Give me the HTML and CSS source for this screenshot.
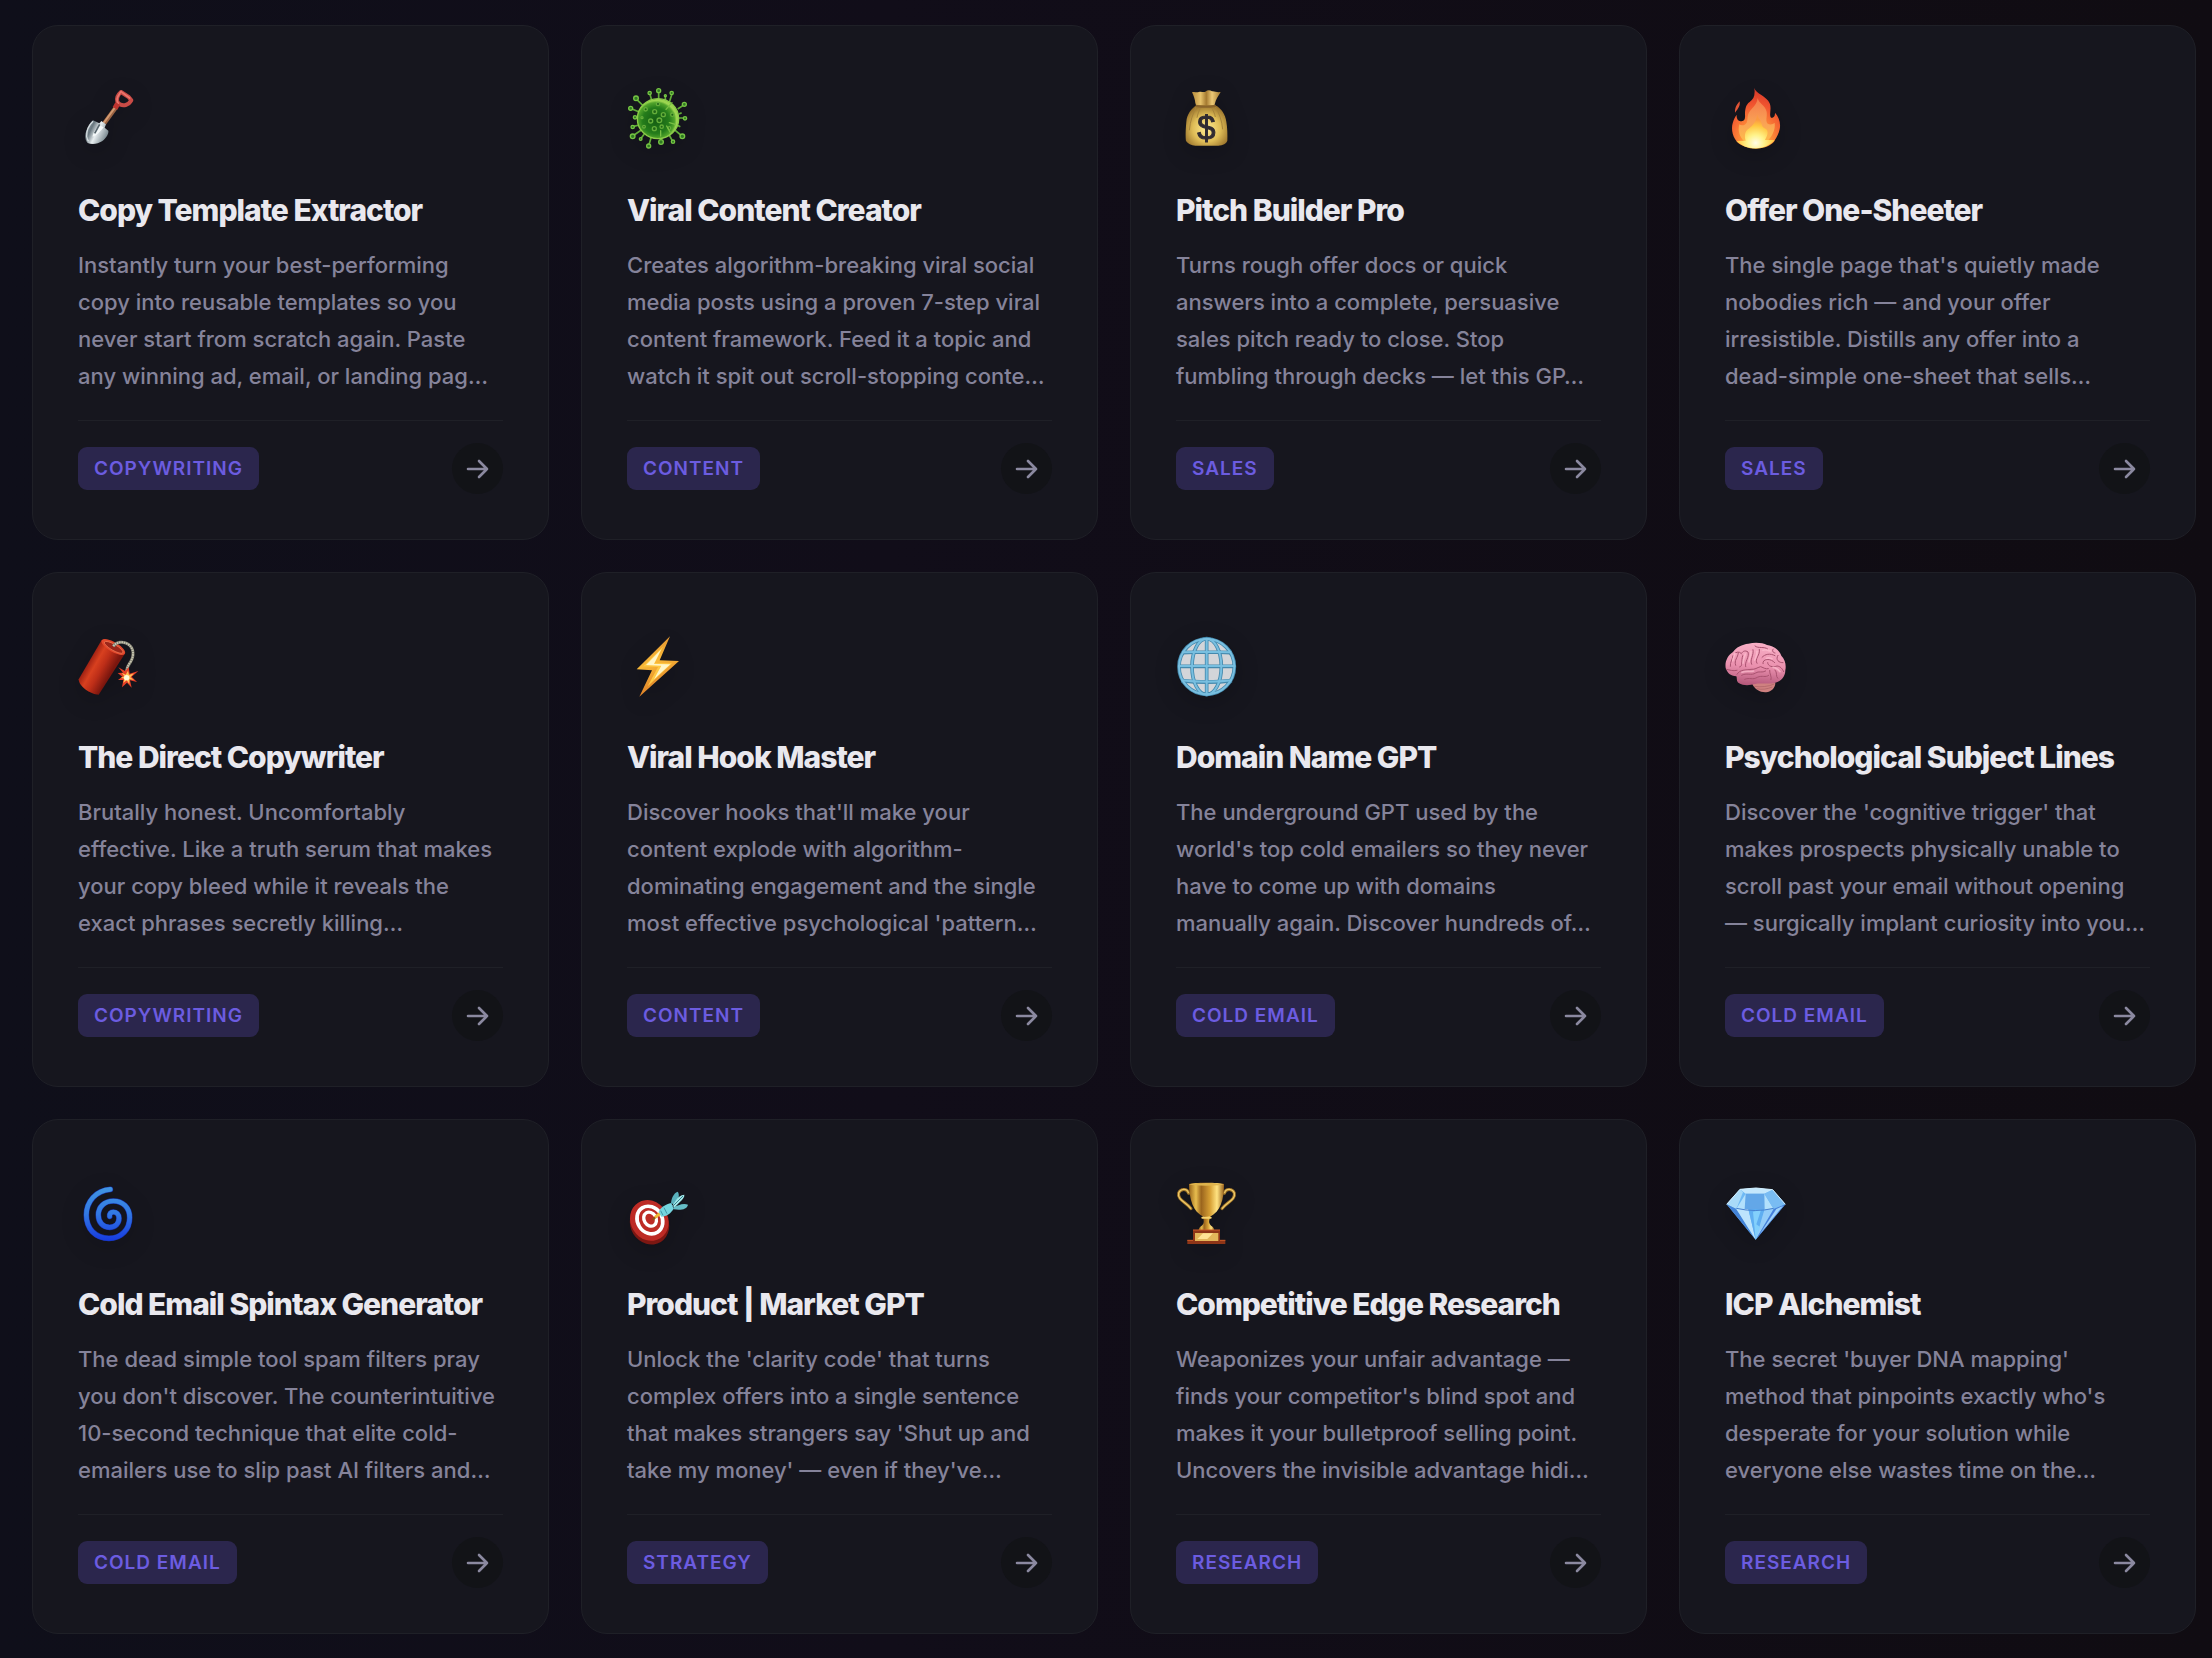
FILE: index.html
```
<!DOCTYPE html>
<html lang="en">
<head>
    <meta charset="UTF-8">
    <meta name="viewport" content="width=device-width, initial-scale=1.0">
    <title>GPT Library</title>
    <link rel="stylesheet" href="styles.css">
</head>
<body>
    <!-- shared arrow icon -->
    <svg class="sprite" aria-hidden="true">
        <symbol id="arrow" viewBox="0 0 24 24">
            <path d="M2 12H21M13 4l8 8-8 8" fill="none" stroke="currentColor" stroke-width="2.6" stroke-linecap="round" stroke-linejoin="round"/>
        </symbol>
    </svg>

    <main class="grid">
        <article class="card">
            <div class="card-icon">
                <svg viewBox="54 57 186 186" aria-hidden="true">
                    <defs>
                        <linearGradient id="blade" x1="0" y1="0" x2="1" y2="0.5"><stop offset="0" stop-color="#a9b4ba"/><stop offset="0.35" stop-color="#69777f"/><stop offset="0.6" stop-color="#e8eef0"/><stop offset="1" stop-color="#7f8d94"/></linearGradient>
                    </defs>
                    <path d="M168 112L133 160" stroke="#9a6343" stroke-width="13"/>
                    <path d="M166 111L131 159" stroke="#d39a70" stroke-width="6"/>
                    <path d="M99 151l19 9 6-7 14 10-4 10 11 9c2 12-10 26-19 32-12 8-30 10-43 5-9-10-9-25-4-37 4-12 10-23 20-31z" fill="url(#blade)"/>
                    <path d="M118 166c-11 12-20 24-20 34 10-2 24-16 33-28z" fill="#f4f8f9"/>
                    <path d="M99 154c-12 12-20 28-19 45 1 8 3 12 6 15" fill="none" stroke="#d5dde0" stroke-width="4"/>
                    <path d="M119 163l-15 27" stroke="#56646c" stroke-width="5"/>
                    <path d="M183 66c-9 8-14 18-11 28 3 9 14 14 25 11 8-2 13-7 17-14l-8-10z" fill="none" stroke="#c94b46" stroke-width="12" stroke-linejoin="round"/>
                    <path d="M183 64l-9 15c-4 8-4 15 1 21M186 67l23 17" fill="none" stroke="#ec766d" stroke-width="5" stroke-linecap="round"/>
                    <path d="M173 101l-8 14" stroke="#bd342f" stroke-width="16"/>
                </svg>
            </div>
            <h2>Copy Template Extractor</h2>
            <p class="desc">Instantly turn your best-performing copy into reusable templates so you never start from scratch again. Paste any winning ad, email, or landing pag…</p>
            <div class="card-footer">
                <span class="tag">Copywriting</span>
                <a class="arrow" href="#" aria-label="Open Copy Template Extractor"><svg><use href="#arrow"/></svg></a>
            </div>
        </article>

        <article class="card">
            <div class="card-icon">
                <svg viewBox="51 57 186 186" aria-hidden="true">
                    <defs>
                        <radialGradient id="virus" cx="0.45" cy="0.55"><stop offset="0" stop-color="#145c13"/><stop offset="0.65" stop-color="#257d1b"/><stop offset="0.9" stop-color="#51a42b"/><stop offset="1" stop-color="#9bd550"/></radialGradient>
                    </defs>
                    <g stroke="#62ad38" stroke-width="5">
                        <path d="M146 90V65M126 94l-7-24M178 97l8-26M166 90v-12M102 110L80 88M90 127l-26-11M84 144H75M203 117l20-13M207 132l8-4M204 144h20M88 165l-20 5M94 180l-26 18M103 192l-11 14M124 200l-8 28M152 200v16M176 192l12 22M192 178l24 20M202 166l9 4"/>
                    </g>
                    <g fill="#2f7a22" stroke="#76c444" stroke-width="4">
                        <circle cx="146" cy="62" r="6"/><circle cx="119" cy="69" r="5"/><circle cx="185" cy="69" r="5"/><circle cx="166" cy="77" r="3"/><circle cx="78" cy="85" r="7"/><circle cx="62" cy="115" r="6"/><circle cx="223" cy="103" r="6"/><circle cx="225" cy="145" r="5"/><circle cx="75" cy="142" r="5"/><circle cx="68" cy="171" r="5"/><circle cx="68" cy="199" r="7"/><circle cx="92" cy="207" r="4"/><circle cx="116" cy="228" r="6"/><circle cx="153" cy="216" r="7"/><circle cx="189" cy="215" r="5"/><circle cx="217" cy="199" r="7"/>
                    </g>
                    <ellipse cx="144" cy="146" rx="62" ry="60" fill="url(#virus)" stroke="#8bcb49" stroke-width="4"/>
                    <g fill="#1f6417" stroke="#64ae3a" stroke-width="4">
                        <circle cx="107" cy="118" r="5"/><circle cx="134" cy="125" r="6"/><circle cx="144" cy="102" r="5"/><circle cx="160" cy="134" r="6"/><circle cx="187" cy="134" r="5"/><circle cx="122" cy="153" r="6"/><circle cx="148" cy="151" r="7"/><circle cx="102" cy="170" r="4"/><circle cx="133" cy="176" r="6"/><circle cx="155" cy="170" r="5"/><circle cx="178" cy="174" r="4"/><circle cx="96" cy="143" r="3"/>
                    </g>
                    <path d="M168 118l18-20M178 158l18 5M152 182v16M170 168l10 18" stroke="#7ac044" stroke-width="4" stroke-linecap="round"/>
                </svg>
            </div>
            <h2>Viral Content Creator</h2>
            <p class="desc">Creates algorithm-breaking viral social media posts using a proven 7-step viral content framework. Feed it a topic and watch it spit out scroll-stopping conte…</p>
            <div class="card-footer">
                <span class="tag">Content</span>
                <a class="arrow" href="#" aria-label="Open Viral Content Creator"><svg><use href="#arrow"/></svg></a>
            </div>
        </article>

        <article class="card">
            <div class="card-icon">
                <svg viewBox="48 57 186 186" aria-hidden="true">
                    <defs>
                        <radialGradient id="bag" cx="0.5" cy="0.58" r="0.6"><stop offset="0" stop-color="#ffeb91"/><stop offset="0.55" stop-color="#dfbd57"/><stop offset="1" stop-color="#97702a"/></radialGradient>
                        <linearGradient id="bagtop"><stop offset="0" stop-color="#b88c3b"/><stop offset="0.3" stop-color="#e6c16a"/><stop offset="0.5" stop-color="#a57a30"/><stop offset="0.7" stop-color="#edc976"/><stop offset="1" stop-color="#a37930"/></linearGradient>
                    </defs>
                    <path d="M96 67c8-3 14 2 20-1 8-3 14 2 20-1 6-5 14-5 20-1 8-1 14 4 26 2-6 11-15 22-17 34l-3 12h-52l-4-13c-1-10-5-22-10-32z" fill="url(#bagtop)"/>
                    <path d="M110 106c-17 10-29 28-31 49-2 22-3 44-1 58 5 8 16 13 28 14h69c14-1 24-6 27-15 1-17 0-40-3-57-3-21-14-39-33-49z" fill="url(#bag)"/>
                    <path d="M108 111c-9 21-18 42-20 70M122 112c-6 13-9 20-11 31M166 111c12 18 20 42 22 67M154 112c5 9 10 18 12 29" fill="none" stroke="#a7843a" stroke-width="3"/>
                    <path d="M107 107q30 7 60 0" fill="none" stroke="#8a642b" stroke-width="6"/>
                    <text class="dollar" x="139" y="207" text-anchor="middle">$</text>
                </svg>
            </div>
            <h2>Pitch Builder Pro</h2>
            <p class="desc">Turns rough offer docs or quick answers into a complete, persuasive sales pitch ready to close. Stop fumbling through decks — let this GP…</p>
            <div class="card-footer">
                <span class="tag">Sales</span>
                <a class="arrow" href="#" aria-label="Open Pitch Builder Pro"><svg><use href="#arrow"/></svg></a>
            </div>
        </article>

        <article class="card">
            <div class="card-icon">
                <svg viewBox="60 57 186 186" aria-hidden="true">
                    <defs>
                        <radialGradient id="fire" cx="0.5" cy="0.9" r="0.85"><stop offset="0" stop-color="#ffd54a"/><stop offset="0.4" stop-color="#fd8b38"/><stop offset="0.75" stop-color="#f0532f"/><stop offset="1" stop-color="#d93c2a"/></radialGradient>
                        <linearGradient id="firemid" x1="0" y1="0" x2="0" y2="1"><stop offset="0" stop-color="#f4794a"/><stop offset="0.5" stop-color="#f9a055"/><stop offset="1" stop-color="#ffc14a"/></linearGradient>
                        <radialGradient id="firecore" cx="0.5" cy="0.85" r="0.65"><stop offset="0" stop-color="#fffde8"/><stop offset="0.35" stop-color="#fff38a"/><stop offset="0.75" stop-color="#ffc540"/><stop offset="1" stop-color="#fb9a42"/></radialGradient>
                    </defs>
                    <path d="M148 54c4 17 37 24 46 46 7 18-3 34 4 43 10 1 12-7 12-15 12 13 18 32 14 50-3 14-9 24-14 31l-3 6c-12 12-30 20-54 21-25 0-43-8-57-20l-6-9c-9-15-11-33-7-47 3-11 7-19 12-26-1 12 4 20 15 20 9-1 11-9 10-20 0-15 2-30 14-38 12-8 17-20 14-42z" fill="url(#fire)"/>
                    <path d="M104 94c2 14-4 21-14 34-1-15 5-24 14-34z" fill="#e25436"/>
                    <path d="M158 84c2 16 24 22 27 42 2 16-5 25 3 35 7 4 15 2 21-2 3 22-10 44-24 56-18 14-48 15-66 0-16-14-21-33-16-52 7 5 17 3 22-5 5-13 0-22 10-35 10-13 21-20 23-39z" fill="url(#firemid)"/>
                    <path d="M157 128c-2 16 12 20 13 34 2 13 11 12 16 18 5 10-1 20-6 30l29 0c-12 14-31 23-57 25-24 0-43-8-57-22l27-1c-4-15-3-29 9-36 12-10 24-20 26-48z" fill="url(#firecore)"/>
                </svg>
            </div>
            <h2>Offer One-Sheeter</h2>
            <p class="desc">The single page that's quietly made nobodies rich — and your offer irresistible. Distills any offer into a<br>dead-simple one-sheet that sells…</p>
            <div class="card-footer">
                <span class="tag">Sales</span>
                <a class="arrow" href="#" aria-label="Open Offer One-Sheeter"><svg><use href="#arrow"/></svg></a>
            </div>
        </article>

        <article class="card">
            <div class="card-icon">
                <svg viewBox="54 48 186 186" aria-hidden="true">
                    <defs>
                        <linearGradient id="stick" gradientUnits="userSpaceOnUse" x1="88" y1="120" x2="153" y2="157"><stop offset="0" stop-color="#9c1f12"/><stop offset="0.3" stop-color="#d8401f"/><stop offset="0.6" stop-color="#bd2e18"/><stop offset="1" stop-color="#7b160e"/></linearGradient>
                    </defs>
                    <path d="M125 60L56 178c0 20 34 46 60 46l78-122z" fill="url(#stick)"/>
                    <ellipse cx="160" cy="81" rx="40" ry="15" transform="rotate(30 160 81)" fill="#e2482c"/>
                    <ellipse cx="161" cy="82" rx="32" ry="9" transform="rotate(30 161 82)" fill="#9b2519" stroke="#f07c57" stroke-width="2"/>
                    <path d="M160 79c9-14 30-16 45-6 17 12 18 34 7 52-9 14-13 20-12 37" fill="none" stroke="#767568" stroke-width="9"/>
                    <path d="M160 79c9-14 30-16 45-6 17 12 18 34 7 52-9 14-13 20-12 37" fill="none" stroke="#c6c4b0" stroke-width="6" stroke-dasharray="5 2"/>
                    <path d="M206 142l3 19 26-8-20 17 16 16-21-5 5 22-14-15-15 14 4-22-16 0 13-10-14-11 16-1-14-16 20 11z" fill="#e63f27"/>
                    <path d="M204 152l3 13 15-5-11 12 11 8-14-2 0 14-8-11-10 8 3-13-10-3 10-4-8-11 12 6z" fill="#ffc155"/>
                    <circle cx="200" cy="173" r="8" fill="#fffbdc"/>
                </svg>
            </div>
            <h2>The Direct Copywriter</h2>
            <p class="desc">Brutally honest. Uncomfortably effective. Like a truth serum that makes your copy bleed while it reveals the exact phrases secretly killing…</p>
            <div class="card-footer">
                <span class="tag">Copywriting</span>
                <a class="arrow" href="#" aria-label="Open The Direct Copywriter"><svg><use href="#arrow"/></svg></a>
            </div>
        </article>

        <article class="card">
            <div class="card-icon">
                <svg viewBox="51 48 186 186" aria-hidden="true">
                    <defs>
                        <linearGradient id="bolt" x1="0" y1="0" x2="0.3" y2="1"><stop offset="0" stop-color="#d8822e"/><stop offset="0.5" stop-color="#f9b938"/><stop offset="1" stop-color="#db7a26"/></linearGradient>
                    </defs>
                    <path d="M180 49L80 148l46 3-38 79L207 123l-58-2z" fill="url(#bolt)"/>
                    <path d="M160 79l-60 60 44 2-31 58 73-69-52-1z" fill="#ffc944"/>
                    <path d="M154 88l-46 47 46 2-22 41 49-45-49-1z" fill="#fff6c9"/>
                </svg>
            </div>
            <h2>Viral Hook Master</h2>
            <p class="desc">Discover hooks that'll make your content explode with algorithm-dominating engagement and the single most effective psychological 'pattern…</p>
            <div class="card-footer">
                <span class="tag">Content</span>
                <a class="arrow" href="#" aria-label="Open Viral Hook Master"><svg><use href="#arrow"/></svg></a>
            </div>
        </article>

        <article class="card">
            <div class="card-icon">
                <svg viewBox="48 48 186 186" aria-hidden="true">
                    <circle cx="140" cy="140" r="86" fill="#d3d5d9"/>
                    <g fill="none" stroke="#4489ad" stroke-width="11">
                        <circle cx="140" cy="140" r="83"/>
                        <ellipse cx="140" cy="140" rx="44" ry="84"/>
                        <path d="M140 54V226M54 139H226M66 98Q140 94 214 98M64 182Q140 191 216 182"/>
                    </g>
                    <g fill="none" stroke="#78bfe0" stroke-width="6">
                        <circle cx="140" cy="140" r="83"/>
                        <ellipse cx="140" cy="140" rx="44" ry="84"/>
                        <path d="M140 54V226M54 138H226M66 97Q140 93 214 97M64 181Q140 190 216 181"/>
                    </g>
                </svg>
            </div>
            <h2>Domain Name GPT</h2>
            <p class="desc">The underground GPT used by the world's top cold emailers so they never have to come up with domains<br>manually again. Discover hundreds of…</p>
            <div class="card-footer">
                <span class="tag">Cold Email</span>
                <a class="arrow" href="#" aria-label="Open Domain Name GPT"><svg><use href="#arrow"/></svg></a>
            </div>
        </article>

        <article class="card">
            <div class="card-icon">
                <svg viewBox="60 48 186 186" aria-hidden="true">
                    <defs>
                        <linearGradient id="brain" x1="0.5" y1="0" x2="0.4" y2="1"><stop offset="0" stop-color="#f9b0c6"/><stop offset="0.55" stop-color="#ea90ae"/><stop offset="1" stop-color="#b4587a"/></linearGradient>
                    </defs>
                    <path d="M142 193c13-10 50-15 69-4 0 14-11 26-28 28-18 1-33-9-41-24z" fill="#cf8180"/>
                    <path d="M148 199c18 3 42 1 60-7M155 206c16 4 33 1 47-5" fill="none" stroke="#a95f64" stroke-width="2"/>
                    <path d="M62 144c-3-19 6-38 22-48 8-14 28-23 46-25 20-5 43-3 56 4 20 2 37 15 43 32 12 12 15 29 12 44 0 18-12 33-30 37-20 6-44 0-61 4-16 4-34 6-49-3-8-6-4-14-7-20-18-1-27-10-32-25z" fill="url(#brain)"/>
                    <g fill="none" stroke="#a9526f" stroke-width="3" stroke-linecap="round">
                        <path d="M64 148c12 2 18 6 32 3M76 139c-1-14 6-18 8-32M92 136c-6-16 7-22 8-38M104 141c10 0 4-20 9-34M122 140c-4-15 12-28 7-44-8-6-16-2-18 2M140 133c-7-13 8-28 4-44M156 130c-9-14 11-24 7-42M150 78c10 9 27 0 38 9M171 112c9-10 24-13 39-5M174 131c-3-17 26-16 35-3M219 106c-9 13 3 23 15 22M188 128c0 11 15 15 28 10 9 0 17 9 20 17M96 163c9-16 27-12 42-15 13 1 17-5 29-8 11 4 14 8 23 6M110 166c14-9 29 2 42-7 9-7 19 1 30-6M119 178c15-7 24 3 38-6 15-7 24 2 34-6M194 151c-1 11 7 18 4 28M210 150c8 7 1 19 8 25M92 98c9-4 15-1 18 4M205 87c-5 4-2 11 5 12"/>
                    </g>
                    <g fill="none" stroke="#ffc3d2" stroke-width="5" stroke-linecap="round" opacity="0.65">
                        <path d="M83 122c3-10 4-17 7-21M114 130c0-12 5-19 7-28M132 126c0-12 7-19 6-31M149 120c4-11 8-16 7-26M174 91c8-5 15 1 23 2M184 115c7-3 11-1 17 1M111 157c13-6 23 0 35-4M204 142c10 0 16 7 21 13"/>
                    </g>
                </svg>
            </div>
            <h2>Psychological Subject Lines</h2>
            <p class="desc">Discover the 'cognitive trigger' that makes prospects physically unable to scroll past your email without opening — surgically implant curiosity into you…</p>
            <div class="card-footer">
                <span class="tag">Cold Email</span>
                <a class="arrow" href="#" aria-label="Open Psychological Subject Lines"><svg><use href="#arrow"/></svg></a>
            </div>
        </article>

        <article class="card">
            <div class="card-icon">
                <svg viewBox="54 54 186 186" aria-hidden="true">
                    <defs>
                        <linearGradient id="swirl" gradientUnits="userSpaceOnUse" x1="0" y1="64" x2="0" y2="228"><stop offset="0" stop-color="#4196e2"/><stop offset="0.5" stop-color="#3279e3"/><stop offset="1" stop-color="#163ae0"/></linearGradient>
                    </defs>
                    <path d="M151 73C108 76 79 110 79 150c0 41 27 70 68 70 38 0 62-28 62-62 0-31-21-50-49-50-27 0-45 18-45 42 0 22 14 37 34 37 17 0 28-12 28-27 0-12-8-19-17-19-8 0-12 6-11 13" fill="none" stroke="#1832ab" stroke-width="17" stroke-linecap="round"/>
                    <path d="M151 73C108 76 79 110 79 150c0 41 27 70 68 70 38 0 62-28 62-62 0-31-21-50-49-50-27 0-45 18-45 42 0 22 14 37 34 37 17 0 28-12 28-27 0-12-8-19-17-19-8 0-12 6-11 13" fill="none" stroke="url(#swirl)" stroke-width="14" stroke-linecap="round"/>
                </svg>
            </div>
            <h2>Cold Email Spintax Generator</h2>
            <p class="desc">The dead simple tool spam filters pray you don't discover. The counterintuitive 10-second technique that elite cold-emailers use to slip past AI filters and…</p>
            <div class="card-footer">
                <span class="tag">Cold Email</span>
                <a class="arrow" href="#" aria-label="Open Cold Email Spintax Generator"><svg><use href="#arrow"/></svg></a>
            </div>
        </article>

        <article class="card">
            <div class="card-icon">
                <svg viewBox="0 0 186 186" aria-hidden="true">
                    <g transform="rotate(-32 68 114)">
                        <ellipse cx="63" cy="121" rx="57" ry="64" fill="#7c1712"/>
                        <ellipse cx="68" cy="112" rx="56" ry="63" fill="#bd2b25"/>
                        <ellipse cx="70" cy="112" rx="37" ry="43" fill="#bd2b25" stroke="#fff" stroke-width="11"/>
                        <ellipse cx="72" cy="110" rx="18" ry="22" fill="#bd2b25" stroke="#fff" stroke-width="10"/>
                    </g>
                    <path d="M77 110l22-19" stroke="#8a5a14" stroke-width="6"/>
                    <path d="M84 103l17-13" stroke="#f1b934" stroke-width="9"/>
                    <path d="M95 86l8 15c15-1 28-9 37-24l-7-17c-17 4-33 14-38 26z" fill="#74d5df"/>
                    <path d="M101 83l7 14M111 74l9 18" stroke="#4198a7" stroke-width="3"/>
                    <path d="M132 61c1-14 7-30 20-35 6 7 4 24-5 40z" fill="#5ab1bd"/>
                    <path d="M138 74c14-8 32-15 45-9-3 14-20 17-43 14z" fill="#66bdc6"/>
                    <path d="M136 68l12-18c5-7 13-14 24-15 1 8-6 14-11 20l-18 18z" fill="#a1e8e9"/>
                    <path d="M138 69l30-30" stroke="#387f8b" stroke-width="3"/>
                </svg>
            </div>
            <h2>Product | Market GPT</h2>
            <p class="desc">Unlock the 'clarity code' that turns complex offers into a single sentence that makes strangers say 'Shut up and take my money' — even if they've…</p>
            <div class="card-footer">
                <span class="tag">Strategy</span>
                <a class="arrow" href="#" aria-label="Open Product | Market GPT"><svg><use href="#arrow"/></svg></a>
            </div>
        </article>

        <article class="card">
            <div class="card-icon">
                <svg viewBox="0 0 186 186" aria-hidden="true">
                    <defs>
                        <linearGradient id="gold"><stop offset="0" stop-color="#99651b"/><stop offset="0.2" stop-color="#e8bd4e"/><stop offset="0.35" stop-color="#9a641d"/><stop offset="0.6" stop-color="#d69f34"/><stop offset="0.8" stop-color="#ffe382"/><stop offset="1" stop-color="#98611b"/></linearGradient>
                    </defs>
                    <g fill="none" stroke="#a27628" stroke-width="9" stroke-linecap="round">
                        <path d="M38 31C34 15 13 17 8 30c-5 20 23 28 37 47M145 31c4-16 25-14 30-1 5 20-23 28-37 47"/>
                    </g>
                    <g fill="none" stroke="#efc968" stroke-width="4" stroke-linecap="round">
                        <path d="M37 29C33 14 13 17 8 30c-5 20 23 28 36 46M146 29c4-15 24-12 29 1 5 20-23 28-36 46"/>
                    </g>
                    <path d="M39 3c13-5 91-5 105 0 0 47-10 82-43 99H83C50 85 40 50 39 3z" fill="url(#gold)"/>
                    <ellipse cx="91" cy="4" rx="51" ry="4" fill="#deb34d"/>
                    <path d="M82 99h19c1 10-4 16 0 23 2 7 14 9 14 20H68c0-11 11-13 14-20 3-7 0-14 0-23z" fill="url(#gold)"/>
                    <path d="M79 104h25" stroke="#f8d36d" stroke-width="6" stroke-linecap="round"/>
                    <path d="M51 141h81v30h16v12H34v-12h17z" fill="#8e3517"/>
                    <path d="M51 141h81M34 172h17M132 172h16" stroke="#c95a28" stroke-width="3"/>
                    <path d="M57 150h70v24H57z" fill="#e3b65a"/>
                    <path d="M64 168l17-17h30l-17 17z" fill="#ffe394"/>
                </svg>
            </div>
            <h2>Competitive Edge Research</h2>
            <p class="desc">Weaponizes your unfair advantage — finds your competitor's blind spot and makes it your bulletproof selling point. Uncovers the invisible advantage hidi…</p>
            <div class="card-footer">
                <span class="tag">Research</span>
                <a class="arrow" href="#" aria-label="Open Competitive Edge Research"><svg><use href="#arrow"/></svg></a>
            </div>
        </article>

        <article class="card">
            <div class="card-icon">
                <svg viewBox="0 0 186 186" aria-hidden="true">
                    <path d="M45 19l48-4 50 5 38 44-89 106L5 64z" fill="#6fb9f4"/>
                    <path d="M5 64l40-45 9 9-20 50z" fill="#a9daf8"/>
                    <path d="M45 19l48-4 50 5-25 12H62z" fill="#c4e7fc"/>
                    <path d="M62 32h56l12 46H48z" fill="#63a7e8"/>
                    <path d="M62 32L34 78h25zM118 32l28 46h-27z" fill="#b2e0fc"/>
                    <path d="M143 20l38 44-35 14-28-46z" fill="#79bcf3"/>
                    <path d="M5 64l29 14 58 92z" fill="#4484d9"/>
                    <path d="M34 78h36l22 92z" fill="#bde4fd"/>
                    <path d="M70 78h49l-27 92z" fill="#5faef1"/>
                    <path d="M119 78h27l-54 92z" fill="#94cdf9"/>
                    <path d="M146 78l35-14-89 106z" fill="#467fda"/>
                    <path d="M154 78l20-9-70 85z" fill="#a0d3fa"/>
                    <path d="M84 86l24-5-14 43 11 8-13 38z" fill="#83d0fc"/>
                    <path d="M34 76q58 13 112 0" fill="none" stroke="#4680cf" stroke-width="3"/>
                    <path d="M5 64l40-45 48-4 50 5 38 44" fill="none" stroke="#d3effe" stroke-width="3"/>
                </svg>
            </div>
            <h2>ICP Alchemist</h2>
            <p class="desc">The secret 'buyer DNA mapping' method that pinpoints exactly who's desperate for your solution while everyone else wastes time on the…</p>
            <div class="card-footer">
                <span class="tag">Research</span>
                <a class="arrow" href="#" aria-label="Open ICP Alchemist"><svg><use href="#arrow"/></svg></a>
            </div>
        </article>
    </main>
</body>
</html>
```
FILE: styles.css
```
* {
    box-sizing: border-box;
}

body {
    margin: 0;
    min-height: 100vh;
    font-family: Inter, "Liberation Sans", sans-serif;
    background: linear-gradient(90deg, #0f0f1a 0%, #110d19 40%, #100c12 100%);
    color: #e9e8ee;
}

.sprite {
    display: none;
}

.grid {
    display: grid;
    grid-template-columns: repeat(4, minmax(0, 1fr));
    gap: 32px;
    padding: 25px 16px 24px 32px;
}

.card {
    display: flex;
    flex-direction: column;
    padding: 45px;
    background: #16161e;
    border: 1px solid #1f2027;
    border-radius: 26px;
}

.card-icon {
    display: flex;
    align-items: center;
    height: 98px;
    margin-bottom: 22px;
}

.card-icon svg {
    width: 62px;
    height: 62px;
    overflow: visible;
    filter: drop-shadow(0 6px 11px rgba(0, 0, 0, 0.2));
}

.dollar {
    font: 98px "Liberation Sans", sans-serif;
    fill: #302b32;
    stroke: #302b32;
    stroke-width: 3px;
}

h2 {
    margin: 0 0 17px;
    font-size: 30px;
    font-weight: 800;
    line-height: 39px;
    letter-spacing: -1px;
}

.desc {
    margin: 0 0 25px;
    font-size: 22px;
    font-weight: 500;
    line-height: 37px;
    color: #85839a;
}

.card-footer {
    display: flex;
    align-items: center;
    justify-content: space-between;
    margin-top: auto;
    padding-top: 22px;
    border-top: 1px solid #1f2027;
}

.tag {
    padding: 10px 16px;
    border-radius: 9px;
    background: #2b264d;
    color: #6c5ce0;
    font-size: 19px;
    font-weight: 600;
    line-height: 23px;
    letter-spacing: 1px;
    text-transform: uppercase;
}

.arrow {
    display: flex;
    align-items: center;
    justify-content: center;
    width: 51px;
    height: 51px;
    border-radius: 50%;
    background: #121317;
    color: #8b89a0;
}

.arrow svg {
    width: 24px;
    height: 24px;
}
```
